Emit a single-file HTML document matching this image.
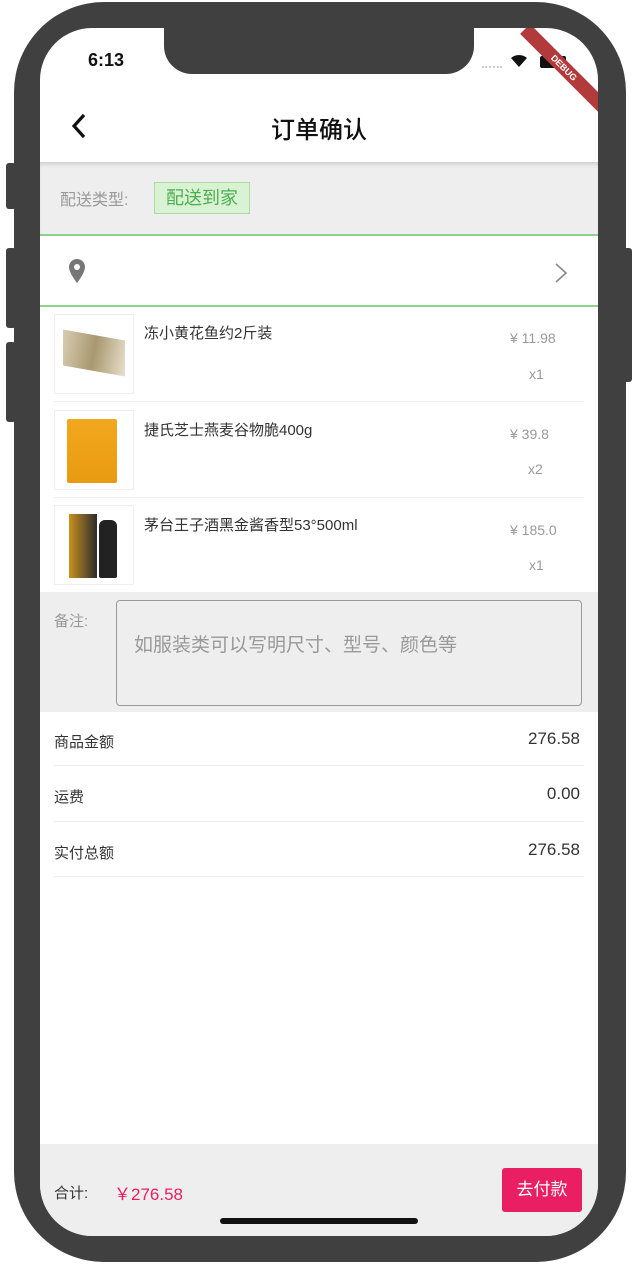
<!DOCTYPE html><html><head><meta charset="utf-8"><style>
*{margin:0;padding:0;box-sizing:border-box}
body{width:638px;height:1264px;background:#fff;position:relative;overflow:hidden;font-family:"Liberation Sans","Noto Sans CJK SC",sans-serif}
.abs{position:absolute}
.frame{left:14px;top:2px;width:612px;height:1260px;background:#404040;border-radius:90px}
.btn{background:#404040;border-radius:3px}
.screen{left:40px;top:28px;width:558px;height:1208px;background:#fff;border-radius:52px;overflow:hidden}
.t{color:#333;font-size:15px}
.g{color:#999}
</style></head><body>
<div class="abs btn" style="left:6px;top:163px;width:10px;height:46px"></div>
<div class="abs btn" style="left:6px;top:248px;width:10px;height:80px"></div>
<div class="abs btn" style="left:6px;top:342px;width:10px;height:80px"></div>
<div class="abs btn" style="left:622px;top:248px;width:10px;height:134px"></div>
<div class="abs frame"></div>
<div class="abs screen">
 <div class="abs" style="left:48px;top:22px;font-size:18px;font-weight:bold;color:#111">6:13</div>
 <div class="abs" style="left:442px;top:38px;width:20px;border-top:2px dotted #ccc"></div>
 <svg class="abs" style="left:470px;top:26px" width="18" height="14" viewBox="0 0 18 14"><path d="M9 13 L1 4 A12 12 0 0 1 17 4 Z" fill="#111"/></svg>
 <div class="abs" style="left:500px;top:28px;width:26px;height:12px;background:#111;border-radius:2px"></div>
 <div class="abs" style="left:490px;top:-4px;width:110px;height:14px;background:#b33a3a;transform:rotate(45deg);transform-origin:0 0;color:#fff;font-size:9px;font-weight:bold;text-align:center;line-height:14px">DEBUG</div>
 <div class="abs" style="left:124px;top:-2px;width:310px;height:48px;background:#404040;border-radius:0 0 28px 28px"></div>
 <svg class="abs" style="left:28px;top:84px" width="22" height="28" viewBox="0 0 22 28"><path d="M16 3 L6 14 L16 25" stroke="#111" stroke-width="3.2" fill="none"/></svg>
 <div class="abs" style="left:0;width:558px;top:82px;text-align:center;font-size:24px;color:#111;font-weight:500">订单确认</div>
 <div class="abs" style="left:0;top:134px;width:558px;height:72px;background:#eee;box-shadow:inset 0 4px 4px -2px rgba(0,0,0,.15)"></div>
 <div class="abs g" style="left:20px;top:158px;font-size:16px">配送类型:</div>
 <div class="abs" style="left:114px;top:154px;width:96px;height:32px;background:#d9f2d3;border:1px solid #a9dc9e;color:#4caf50;font-size:18px;line-height:30px;text-align:center">配送到家</div>
 <div class="abs" style="left:0;top:206px;width:558px;height:2px;background:#8fd38a"></div>
 <svg class="abs" style="left:28px;top:230px" width="18" height="26" viewBox="0 0 18 26"><path d="M9 1C4.5 1 1 4.5 1 9c0 6 8 16 8 16s8-10 8-16c0-4.5-3.5-8-8-8z" fill="#777"/><circle cx="9" cy="9" r="3" fill="#fff"/></svg>
 <svg class="abs" style="left:514px;top:234px" width="14" height="22" viewBox="0 0 14 22"><path d="M2 2 L12 11 L2 20" stroke="#888" stroke-width="1.6" fill="none"/></svg>
 <div class="abs" style="left:0;top:277px;width:558px;height:2px;background:#8fd38a"></div>
 <div class="abs" style="left:14px;top:286px;width:80px;height:80px;border:1px solid #eee;background:#fff"><div style="margin:20px 8px;height:36px;background:linear-gradient(100deg,#d9cdb2,#a89870,#e8e0cc);transform:skewY(10deg)"></div></div>
 <div class="abs t" style="left:104px;top:294px">冻小黄花鱼约2斤装</div>
 <div class="abs g" style="left:470px;top:302px;font-size:14px">¥ 11.98</div>
 <div class="abs g" style="left:489px;top:338px;font-size:14px">x1</div>
 <div class="abs" style="left:14px;top:373px;width:530px;height:1px;background:#eee"></div>
 <div class="abs" style="left:14px;top:382px;width:80px;height:80px;border:1px solid #eee"><div style="margin:8px 12px;width:50px;height:64px;background:linear-gradient(#f2a81e,#e89a10);border-radius:2px"></div></div>
 <div class="abs t" style="left:104px;top:391px">捷氏芝士燕麦谷物脆400g</div>
 <div class="abs g" style="left:470px;top:398px;font-size:14px">¥ 39.8</div>
 <div class="abs g" style="left:488px;top:433px;font-size:14px">x2</div>
 <div class="abs" style="left:14px;top:469px;width:530px;height:1px;background:#eee"></div>
 <div class="abs" style="left:14px;top:477px;width:80px;height:80px;border:1px solid #eee"><div class="abs" style="left:14px;top:8px;width:28px;height:64px;background:linear-gradient(90deg,#c8901f,#2d2d2d)"></div><div class="abs" style="left:44px;top:14px;width:18px;height:58px;background:#222;border-radius:6px 6px 2px 2px"></div></div>
 <div class="abs t" style="left:104px;top:486px">茅台王子酒黑金酱香型53°500ml</div>
 <div class="abs g" style="left:470px;top:494px;font-size:14px">¥ 185.0</div>
 <div class="abs g" style="left:489px;top:529px;font-size:14px">x1</div>
 <div class="abs" style="left:0;top:564px;width:558px;height:120px;background:#eee"></div>
 <div class="abs g" style="left:14px;top:582px;font-size:15px">备注:</div>
 <div class="abs" style="left:76px;top:572px;width:466px;height:106px;border:1.5px solid #999;border-radius:4px;background:#eee"></div>
 <div class="abs g" style="left:94px;top:602px;font-size:19px">如服装类可以写明尺寸、型号、颜色等</div>
 <div class="abs t" style="left:14px;top:703px">商品金额</div><div class="abs" style="right:18px;top:701px;font-size:17px;color:#333">276.58</div>
 <div class="abs" style="left:14px;top:737px;width:530px;height:1px;background:#eee"></div>
 <div class="abs t" style="left:14px;top:758px">运费</div><div class="abs" style="right:18px;top:756px;font-size:17px;color:#333">0.00</div>
 <div class="abs" style="left:14px;top:793px;width:530px;height:1px;background:#eee"></div>
 <div class="abs t" style="left:14px;top:814px">实付总额</div><div class="abs" style="right:18px;top:812px;font-size:17px;color:#333">276.58</div>
 <div class="abs" style="left:14px;top:848px;width:530px;height:1px;background:#eee"></div>
 <div class="abs" style="left:0;top:1116px;width:558px;height:92px;background:#eee"></div>
 <div class="abs t" style="left:14px;top:1154px">合计:</div>
 <div class="abs" style="left:74px;top:1152px;font-size:17px;color:#e91e63">￥276.58</div>
 <div class="abs" style="left:462px;top:1140px;width:80px;height:44px;background:#e91e63;border-radius:3px;color:#fff;font-size:17px;line-height:44px;text-align:center">去付款</div>
 <div class="abs" style="left:180px;top:1190px;width:198px;height:6px;background:#111;border-radius:3px"></div>
</div>
</body></html>
